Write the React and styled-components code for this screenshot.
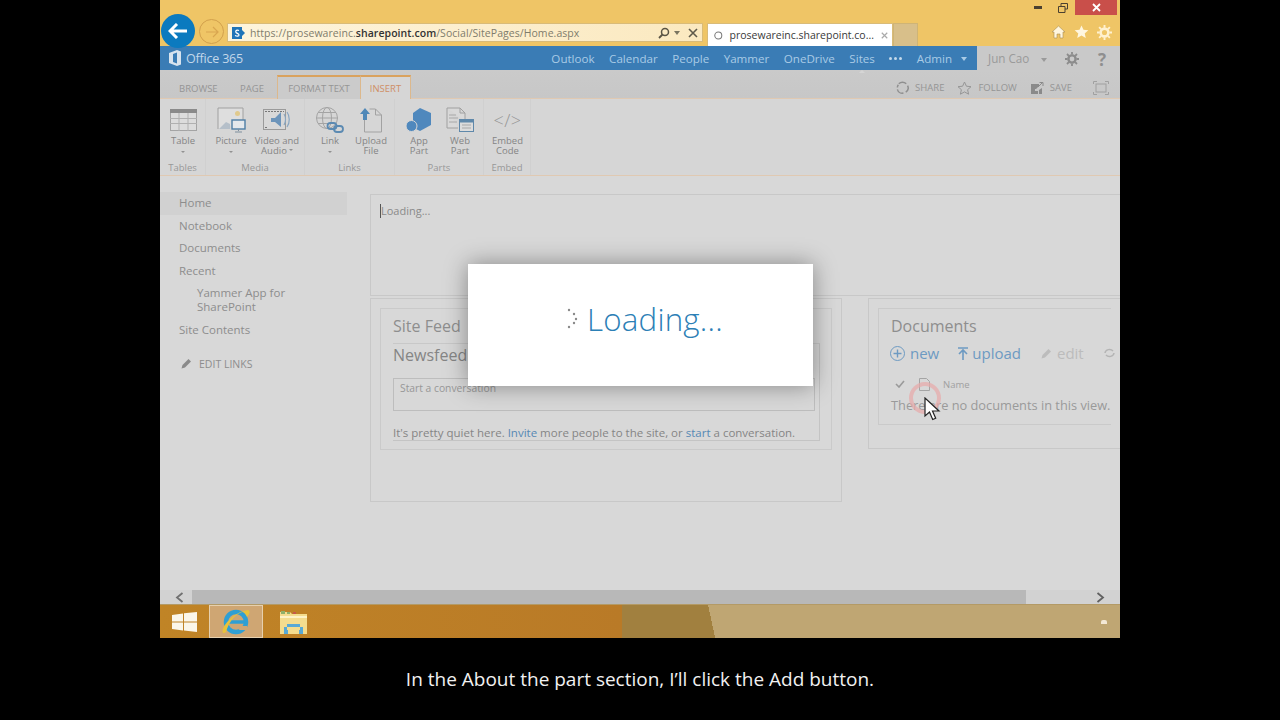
import React from 'react';
import styled, { createGlobalStyle } from 'styled-components';

const GlobalStyle = createGlobalStyle`
	html, body {
		margin: 0;
		padding: 0;
		background: #000;
		font-family: "Open Sans", "Liberation Sans", sans-serif;
	}
	* {
		box-sizing: border-box;
	}
`;

const Stage = styled.div`
	width: 1280px;
	height: 720px;
	background: #000;
	display: flex;
	flex-direction: column;
	align-items: center;
	overflow: hidden;
`;

const Screen = styled.div`
	position: relative;
	width: 960px;
	height: 638px;
	flex: none;
	display: flex;
	flex-direction: column;
	background: #d8d8d8;
	overflow: hidden;
`;

const Caption = styled.div`
	flex: 1;
	display: flex;
	align-items: center;
	justify-content: center;
	color: #f1f1f1;
	font-size: 19px;
`;

/* browser chrome */
const Chrome = styled.div`
	height: 46px;
	flex: none;
	background: #efc566;
	display: flex;
	flex-direction: column;
`;

const WindowControls = styled.div`
	height: 15px;
	margin-bottom: 8px;
	display: flex;
	justify-content: flex-end;
	align-items: center;
	padding-right: 3px;
`;

const WindowButton = styled.div`
	width: ${p => p.$w}px;
	height: 15px;
	display: flex;
	align-items: center;
	justify-content: center;
	background: ${p => p.$bg || 'transparent'};
`;

const NavRow = styled.div`
	height: 23px;
	display: flex;
	align-items: flex-start;
`;

const BackButton = styled.div`
	width: 34px;
	height: 34px;
	margin: -9px 0 0 1px;
	border-radius: 50%;
	background: #0b7abf;
	display: flex;
	align-items: center;
	justify-content: center;
	flex: none;
	position: relative;
	z-index: 1;
`;

const ForwardButton = styled.div`
	width: 25px;
	height: 25px;
	margin: -4px 0 0 4px;
	border-radius: 50%;
	border: 1px solid #d2a04c;
	display: flex;
	align-items: center;
	justify-content: center;
	flex: none;
`;

const AddressBar = styled.div`
	width: 476px;
	height: 19px;
	margin-left: 3px;
	flex: none;
	display: flex;
	align-items: center;
	padding: 0 4px;
	background: linear-gradient(90deg, #fdf4dc, #fbe9c0);
	border: 1px solid #d9bb78;
	font-size: 10.5px;
	color: #7f7c6c;
	letter-spacing: 0.05px;
`;

const Url = styled.span`
	margin-left: 4px;
	white-space: nowrap;
	b {
		font-weight: 600;
		color: #333;
	}
`;

const AddressTools = styled.div`
	margin-left: auto;
	display: flex;
	align-items: center;
	gap: 4px;
`;

const Tab = styled.div`
	width: 186px;
	height: 23px;
	margin-left: 4px;
	flex: none;
	background: #fff;
	display: flex;
	align-items: center;
	gap: 7px;
	padding: 0 4px 0 6px;
	font-size: 10.5px;
	color: #3a3a3a;
	white-space: nowrap;
	border: 1px solid #d9bb78;
	border-bottom: none;
`;

const NewTab = styled.div`
	width: 25px;
	height: 23px;
	flex: none;
	background: #d8bf8a;
	border: 1px solid #cfb475;
	border-bottom: none;
`;

const ChromeTools = styled.div`
	margin-left: auto;
	display: flex;
	gap: 8px;
	padding: 2px 8px 0 0;
`;

/* office 365 bar */
const SuiteBar = styled.div`
	height: 24px;
	flex: none;
	display: flex;
	background: #c9c9c9;
`;

const SuiteBlue = styled.div`
	width: 817px;
	flex: none;
	display: flex;
	align-items: center;
	background: #3a7cb5;
	padding: 0 10px 0 8px;
	color: #a9cbe6;
	font-size: 11.6px;
`;

const Logo = styled.div`
	display: flex;
	align-items: center;
	gap: 3px;
	color: #c3d8ea;
	font-size: 12.5px;
	letter-spacing: -0.2px;
`;

const SuiteNav = styled.nav`
	margin-left: auto;
	display: flex;
	align-items: center;
	gap: 14.5px;
`;

const SuiteLink = styled.span`
	position: relative;
	white-space: nowrap;
	${p => p.$active && `
		&::after {
			content: '';
			position: absolute;
			left: 50%;
			bottom: -7px;
			margin-left: -3px;
			border: 3px solid transparent;
			border-top: 0;
			border-bottom-color: #d5d5d5;
		}
	`}
`;

const Dots = styled.span`
	display: flex;
	gap: 2px;
	i {
		width: 3px;
		height: 3px;
		border-radius: 50%;
		background: #c4d9ea;
	}
`;

const Caret = styled.span`
	display: inline-block;
	margin-left: ${p => p.$gap || 0}px;
	margin-right: ${p => p.$after || 0}px;
	border: 3.5px solid transparent;
	border-bottom: 0;
	border-top: 4px solid ${p => p.$color || '#a9cbe6'};
	vertical-align: middle;
`;

const SuiteUser = styled.div`
	flex: 1;
	display: flex;
	align-items: center;
	padding-left: 11px;
	color: #9a9a9a;
	font-size: 11.7px;
`;

const UserTools = styled.div`
	margin-left: auto;
	display: flex;
	align-items: center;
	gap: 19px;
	padding: 2px 14px 0 0;
	font-size: 17px;
	font-weight: 700;
	color: #8f8f8f;
`;

/* ribbon */
const RibbonTabs = styled.div`
	height: 29px;
	flex: none;
	display: flex;
	align-items: flex-end;
	padding-left: 19px;
	background: linear-gradient(#cacaca, #c7c7c7);
	border-bottom: 1px solid #e0c9b2;
	font-size: 9.5px;
	color: #959595;
`;

const PlainTab = styled.span`
	width: ${p => p.$w}px;
	height: 23px;
	line-height: 28px;
	flex: none;
`;

const ContextTab = styled.span`
	width: ${p => p.$w}px;
	height: 24px;
	margin-bottom: -1px;
	flex: none;
	text-align: center;
	line-height: 23px;
	border: 1px solid #dcb88c;
	border-top: 2px solid #d9a25e;
	border-bottom: none;
	border-left-width: ${p => (p.$joined ? 0 : 1)}px;
	color: ${p => (p.$active ? '#cf8f66' : '#959595')};
	background: ${p => (p.$active ? '#d6d6d6' : '#cbcbcb')};
`;

const PageActions = styled.div`
	margin-left: auto;
	height: 100%;
	display: flex;
	align-items: center;
	padding: 7px 11px 0 0;
	font-size: 9.5px;
	color: #959595;
`;

const PageAction = styled.span`
	display: flex;
	align-items: center;
	gap: 6px;
	margin-right: ${p => p.$mr}px;
`;

const Ribbon = styled.div`
	height: 77px;
	flex: none;
	display: flex;
	background: #d6d6d6;
	border-bottom: 1px solid #e0c9b2;
`;

const RibbonGroup = styled.div`
	width: ${p => p.$w}px;
	flex: none;
	display: flex;
	flex-direction: column;
	border-right: 1px solid #d0d0d0;
`;

const GroupButtons = styled.div`
	flex: 1;
	display: flex;
	padding-top: 7px;
	padding-left: ${p => p.$pad || 0}px;
`;

const GroupLabel = styled.div`
	height: 14px;
	line-height: 14px;
	text-align: center;
	font-size: 9.5px;
	color: #989898;
`;

const RibbonButton = styled.div`
	width: ${p => p.$w}px;
	flex: none;
	display: flex;
	flex-direction: column;
	align-items: center;
	font-size: 9.5px;
	line-height: 9.5px;
	color: #858585;
	text-align: center;
	white-space: nowrap;
`;

const ButtonIcon = styled.div`
	height: 28px;
	margin-bottom: 2px;
	display: flex;
	align-items: center;
	justify-content: center;
`;

const EmbedGlyph = styled.span`
	font-size: 18px;
	font-weight: 300;
	line-height: 28px;
	color: #969696;
	letter-spacing: 0.5px;
`;

const SmallCaret = styled.span`
	display: inline-block;
	border: 2px solid transparent;
	border-bottom: 0;
	border-top: 2.5px solid #929292;
	margin: ${p => (p.$inline ? '0 0 1px 2px' : '5px 0 0')};
	vertical-align: middle;
`;

/* page */
const Content = styled.div`
	flex: 1;
	min-height: 0;
	display: flex;
	overflow: hidden;
`;

const Sidebar = styled.div`
	width: 210px;
	flex: none;
	padding-top: 16px;
	font-size: 11.5px;
	line-height: 14px;
	color: #8d8d8d;
`;

const NavItem = styled.div`
	width: 187px;
	padding: 4.25px 0 4.25px ${p => (p.$sub ? 37 : 19)}px;
	background: ${p => (p.$selected ? '#d1d1d1' : 'transparent')};
`;

const EditLinks = styled.div`
	display: flex;
	align-items: center;
	gap: 7px;
	margin-top: 11px;
	padding-left: 21px;
	height: 23px;
	font-size: 10.5px;
`;

const Main = styled.div`
	flex: 1;
	min-width: 0;
	padding-top: 18px;
`;

const EditorBox = styled.div`
	height: 102px;
	border: 1px solid #c8c8c8;
	border-right: none;
	padding: 9px 9px;
	font-size: 11px;
	line-height: 14px;
	color: #8a8a8a;
	display: flex;
`;

const TextCaret = styled.span`
	width: 1px;
	height: 14px;
	background: #555;
`;

const ZoneRow = styled.div`
	margin-top: 2px;
	display: flex;
	align-items: flex-start;
`;

const Zone = styled.div`
	width: ${p => p.$w}px;
	height: ${p => p.$h}px;
	margin-left: ${p => p.$ml || 0}px;
	flex: none;
	padding: 9px;
	border: 1px solid #c8c8c8;
	${p => p.$open && 'border-right: none;'}
`;

const WebPart = styled.div`
	height: ${p => p.$h}px;
	padding: 8px 12px 0;
	border: 1px solid #cacaca;
	${p => p.$open && 'border-right: none;'}
`;

const PartTitle = styled.div`
	font-size: 16px;
	line-height: 18px;
	height: 20px;
	color: #8e8e8e;
`;

const FeedBox = styled.div`
	width: 427px;
	height: 98px;
	margin-top: 6px;
	border-right: 1px solid #c4c4c4;
	border-bottom: 1px solid #c4c4c4;
	border-top: 1px solid #c8c8c8;
`;

const FeedTitle = styled.div`
	font-size: 16px;
	line-height: 22px;
	height: 34px;
	color: #858585;
`;

const Composer = styled.div`
	width: 422px;
	height: 33px;
	padding: 2px 6px;
	border: 1px solid #bdbdbd;
	font-size: 10.3px;
	line-height: 14px;
	color: #979797;
`;

const QuietText = styled.div`
	margin-top: 15px;
	font-size: 11.5px;
	line-height: 14px;
	color: #858585;
	white-space: nowrap;
`;

const InlineLink = styled.span`
	color: #5688b4;
`;

const DocToolbar = styled.div`
	display: flex;
	align-items: center;
	margin: 5px 0 0 -1px;
	height: 22px;
	font-size: 15px;
	white-space: nowrap;
`;

const DocAction = styled.span`
	display: flex;
	align-items: center;
	gap: ${p => p.$gap}px;
	margin-right: ${p => p.$mr || 0}px;
	color: ${p => (p.$off ? '#bcbcbc' : '#6d9ac2')};
`;

const ListHeader = styled.div`
	display: flex;
	align-items: center;
	height: 20px;
	margin-top: 10px;
	padding-left: 4px;
	font-size: 9.5px;
	color: #a0a0a0;
`;

const HeaderCell = styled.span`
	display: flex;
	margin-right: ${p => p.$mr}px;
`;

const EmptyText = styled.div`
	margin-top: 3px;
	font-size: 12.8px;
	line-height: 16px;
	color: #9a9a9a;
	white-space: nowrap;
`;

/* scrollbar and taskbar */
const Scrollbar = styled.div`
	height: 14px;
	flex: none;
	display: flex;
	align-items: center;
	background: #d2d2d2;
`;

const ScrollButton = styled.div`
	width: ${p => p.$w}px;
	flex: none;
	display: flex;
	padding-left: ${p => p.$pad}px;
`;

const ScrollThumb = styled.div`
	width: 834px;
	height: 14px;
	flex: none;
	background: #b8b8b8;
`;

const Taskbar = styled.div`
	height: 34px;
	flex: none;
	display: flex;
	align-items: center;
	background:
		linear-gradient(90deg, #c08426 0, #b97a27 462px, transparent 462px),
		linear-gradient(78deg, #a1803f 543px, #bfa673 543px);
	border-top: 1px solid #b39a66;
`;

const StartButton = styled.div`
	width: 49px;
	flex: none;
	display: flex;
	justify-content: center;
`;

const TaskItem = styled.div`
	width: 54px;
	height: 33px;
	margin-left: ${p => p.$ml || 0}px;
	flex: none;
	display: flex;
	align-items: center;
	justify-content: center;
	${p => p.$active && 'background: #cfa673; border: 1px solid #e6d0ae;'}
`;

const TrayArrow = styled.div`
	margin-left: auto;
	margin-right: 13px;
	width: 6px;
	height: 4px;
	background: #f3e8d6;
	border-radius: 2px 2px 0 0;
`;

/* overlays */
const Dialog = styled.div`
	position: absolute;
	left: 308px;
	top: 264px;
	width: 345px;
	height: 122px;
	background: #fff;
	box-shadow: 0 0 22px rgba(0, 0, 0, 0.38);
	display: flex;
	align-items: center;
	padding: 0 0 12px 98px;
	font-size: 31.3px;
	font-weight: 300;
	letter-spacing: 0.2px;
	color: #2c80b6;
	gap: 7px;
`;

const ClickRing = styled.div`
	position: absolute;
	left: 749px;
	top: 382px;
	width: 32px;
	height: 32px;
	border: 4px solid rgba(232, 170, 170, 0.7);
	border-radius: 50%;
`;

const Pointer = styled.svg`
	position: absolute;
	left: 764px;
	top: 397px;
`;

/* drawn icons */
const TableIcon = () => (
	<svg width="27" height="22" viewBox="0 0 27 22">
		<rect x="0.5" y="0.5" width="26" height="21" fill="#dcdcdc" stroke="#a4a4a4" />
		<rect x="0" y="0" width="27" height="4" fill="#8a8a8a" />
		<path d="M0 9.5h27M0 14.5h27M9 4v18M18 4v18" stroke="#b0b0b0" fill="none" />
	</svg>
);

const PictureIcon = () => (
	<svg width="29" height="26" viewBox="0 0 29 26">
		<path d="M1 22V1h25v14" fill="#dedede" stroke="#a0a0a0" />
		<path d="M2 22l7-7 4 2v5z" fill="#b5bfc9" />
		<circle cx="20.5" cy="6.5" r="2.5" fill="#e0c98c" />
		<rect x="15" y="13" width="13" height="9" fill="#e4e8ec" stroke="#4e7ea6" strokeWidth="1.4" />
		<path d="M21.5 22v2M18 25h7" stroke="#7f8f9d" />
	</svg>
);

const VideoIcon = () => (
	<svg width="28" height="24" viewBox="0 0 28 24">
		<rect x="0.5" y="1.5" width="22" height="20" fill="#d8d8d8" stroke="#9a9a9a" />
		<path d="M2 3.5h19M2 19.5h3" stroke="#777" strokeDasharray="2 1" fill="none" />
		<path d="M8 10h4l6-6v15l-6-5H8z" fill="#6c94ba" />
		<path d="M21 6c2 3 2 8 0 11M24 4c3 4 3 11 0 15" stroke="#88a6c2" fill="none" strokeWidth="1.2" />
	</svg>
);

const LinkIcon = () => (
	<svg width="30" height="26" viewBox="0 0 30 26">
		<circle cx="12" cy="11" r="10.5" fill="none" stroke="#a4a4a4" />
		<ellipse cx="12" cy="11" rx="4.5" ry="10.5" fill="none" stroke="#a4a4a4" />
		<path d="M1.5 11h21M3 5.5h18M3 16.5h18" stroke="#a4a4a4" fill="none" />
		<rect x="12.5" y="16" width="9" height="6" rx="3" fill="none" stroke="#5c8ab2" strokeWidth="1.8" />
		<rect x="19" y="19" width="9" height="6" rx="3" fill="none" stroke="#5c8ab2" strokeWidth="1.8" />
	</svg>
);

const UploadIcon = () => (
	<svg width="24" height="26" viewBox="0 0 24 26">
		<path d="M5.5 11v14h17V8l-6-6h-6M16.5 2v6h6" fill="none" stroke="#a2a2a2" />
		<path d="M6 1l5 6H8v6H4V7H1z" fill="#4f88b8" />
	</svg>
);

const AppPartIcon = () => (
	<svg width="26" height="24" viewBox="0 0 26 24">
		<path d="M14 0l11 5v12l-11 6-7-3.5V5z" fill="#4f88bd" />
		<circle cx="5.5" cy="18" r="5.5" fill="#4f88bd" stroke="#d6d6d6" />
	</svg>
);

const WebPartIcon = () => (
	<svg width="29" height="26" viewBox="0 0 29 26">
		<path d="M1 1h13l5 5v8M1 1v20h11M14 1v5h5" fill="#d9d9d9" stroke="#a0a0a0" />
		<path d="M3 8h7M3 11h9M3 15h8" stroke="#a8a8a8" fill="none" />
		<rect x="13.5" y="12.5" width="14" height="12" fill="#dcdcdc" stroke="#5f88aa" />
		<rect x="14" y="13" width="13" height="2.5" fill="#5f88aa" />
		<path d="M16 18h9M16 21h9" stroke="#a8a8a8" fill="none" />
	</svg>
);

const ShareIcon = () => (
	<svg width="13" height="13" viewBox="0 0 14 14">
		<path d="M3 3a5.5 5.5 0 0 1 8 0M12.5 5a5.5 5.5 0 0 1-2 7M8 13a5.5 5.5 0 0 1-6.5-4M1.5 7a5 5 0 0 1 1-3" fill="none" stroke="#8f8f8f" strokeWidth="1.6" />
	</svg>
);

const StarOutline = () => (
	<svg width="15" height="14" viewBox="0 0 15 14">
		<path d="M7.5 1l1.9 4.2 4.6.5-3.4 3 1 4.5-4.1-2.3-4.1 2.3 1-4.5-3.4-3 4.6-.5z" fill="none" stroke="#969696" />
	</svg>
);

const SaveIcon = () => (
	<svg width="14" height="14" viewBox="0 0 14 14">
		<path d="M1 3h8v2l-3 3h-1v5H1z M2 13v-3h6v3zM9 13V9l3-2v6z" fill="#8a8a8a" />
		<path d="M8 6l4-4M9.5 1.5H13V5" stroke="#8a8a8a" fill="none" />
	</svg>
);

const FullscreenIcon = () => (
	<svg width="16" height="14" viewBox="0 0 16 14">
		<rect x="3" y="3" width="10" height="8" fill="none" stroke="#a0a0a0" />
		<path d="M0.5 3V0.5H4M12 0.5h3.5V3M15.5 11v2.5H12M4 13.5H0.5V11" fill="none" stroke="#a0a0a0" />
	</svg>
);

const GearIcon = ({ size = 14, color = '#8c8c8c' }) => (
	<svg width={size} height={size} viewBox="0 0 14 14">
		<circle cx="7" cy="7" r="3.6" fill="none" stroke={color} strokeWidth="2.4" />
		<path d="M7 0v2.5M7 11.5V14M0 7h2.5M11.5 7H14M2 2l1.8 1.8M10.2 10.2L12 12M2 12l1.8-1.8M10.2 3.8L12 2" stroke={color} strokeWidth="1.8" />
	</svg>
);

const IeIcon = () => (
	<svg width="30" height="28" viewBox="0 0 30 28">
		<ellipse cx="15" cy="14" rx="10" ry="10" fill="none" stroke="#2f9fd3" strokeWidth="4.5" />
		<path d="M7 14h17" stroke="#2f9fd3" strokeWidth="3.5" />
		<path d="M19 18l7 0v4h-8z" fill="#cfa673" />
		<path d="M2 25C-1 20 12 4 27 2c3 1 1 5-1 7-1-3-3-5-5-5C12 7 7 17 5 24c-1 1-2 1-3 1z" fill="#e8c23a" />
	</svg>
);

const FolderIcon = () => (
	<svg width="30" height="28" viewBox="0 0 30 28">
		<path d="M1 4h10l2 2h15v20H1z" fill="#f4dc8e" />
		<path d="M2 3h4v3H2zM8 4h3v2H8z" fill="#8fb06a" />
		<path d="M14 4h3v2h-3z" fill="#c65a4a" />
		<path d="M1 8h27v2H1z" fill="#fdf3c8" />
		<path d="M5 26v-7h3v-3h13v3h3v7h-4v-4H9v4z" fill="#58a9d6" />
		<path d="M8 19h13v3H8z" fill="#f4dc8e" />
	</svg>
);

const App = () => {
	return (
		<Stage>
			<GlobalStyle />
			<Screen>
				<Chrome>
					<WindowControls>
						<WindowButton $w={25}>
							<svg width="8" height="3"><rect width="8" height="3" fill="#4a4030" /></svg>
						</WindowButton>
						<WindowButton $w={25}>
							<svg width="10" height="10" viewBox="0 0 10 10">
								<path d="M0.5 3.5h6.5v6H0.5zM3 3V0.5h6.5V6H7" fill="none" stroke="#4a4030" />
							</svg>
						</WindowButton>
						<WindowButton $w={42} $bg="#c94f4a">
							<svg width="9" height="9" viewBox="0 0 9 9">
								<path d="M1 1l7 7M8 1L1 8" stroke="#fff" strokeWidth="1.8" />
							</svg>
						</WindowButton>
					</WindowControls>
					<NavRow>
						<BackButton>
							<svg width="20" height="16" viewBox="0 0 20 16">
								<path d="M9 1L2 8l7 7M2 8h17" fill="none" stroke="#fff" strokeWidth="3" />
							</svg>
						</BackButton>
						<ForwardButton>
							<svg width="14" height="12" viewBox="0 0 14 12">
								<path d="M8 1l5 5-5 5M13 6H1" fill="none" stroke="#d9a650" strokeWidth="1.2" />
							</svg>
						</ForwardButton>
						<AddressBar>
							<svg width="14" height="14" viewBox="0 0 14 14">
								<rect x="0" y="1" width="10" height="12" fill="#1f74b8" />
								<path d="M10 4l3 3-3 3z" fill="#1f74b8" />
								<path d="M7 4.5C5 3.5 3 4.5 4 6.5c1 1 3 1 3 2.5 0 1.5-2 1.5-4 .5" fill="none" stroke="#fff" strokeWidth="1.2" />
							</svg>
							<Url>https://prosewareinc.<b>sharepoint.com</b>/Social/SitePages/Home.aspx</Url>
							<AddressTools>
								<svg width="12" height="12" viewBox="0 0 12 12">
									<circle cx="7" cy="5" r="3.5" fill="none" stroke="#5a5444" strokeWidth="1.5" />
									<path d="M4.5 7.5L1 11" stroke="#5a5444" strokeWidth="1.8" />
								</svg>
								<Caret $after={4} $color="#7a745f" />
								<svg width="10" height="10" viewBox="0 0 10 10">
									<path d="M1 1l8 8M9 1l-8 8" stroke="#5f5a4a" strokeWidth="1.6" />
								</svg>
							</AddressTools>
						</AddressBar>
						<Tab>
							<svg width="11" height="11" viewBox="0 0 11 11">
								<circle cx="5.5" cy="5.5" r="4.5" fill="none" stroke="#777" strokeWidth="1.3" />
							</svg>
							prosewareinc.sharepoint.co...
							<svg width="9" height="9" viewBox="0 0 9 9">
								<path d="M1 1l7 7M8 1L1 8" stroke="#aaa" strokeWidth="1.5" />
							</svg>
						</Tab>
						<NewTab />
						<ChromeTools>
							<svg width="15" height="14" viewBox="0 0 15 14">
								<path d="M7.5 1L1 7h2v6h3V9h3v4h3V7h2z" fill="#fff6df" stroke="#a88f55" strokeWidth="0.6" />
							</svg>
							<svg width="15" height="14" viewBox="0 0 15 14">
								<path d="M7.5 0.5l2 4.3 4.8.5-3.6 3.1 1.1 4.7-4.3-2.5-4.3 2.5 1.1-4.7L0.7 5.3l4.8-.5z" fill="#fff6df" />
							</svg>
							<GearIcon size={15} color="#fff1cf" />
						</ChromeTools>
					</NavRow>
				</Chrome>

				<SuiteBar>
					<SuiteBlue>
						<Logo>
							<svg width="15" height="16" viewBox="0 0 15 16">
								<path d="M1 3l8-3 4 1.5v13L9 16l-8-3zM5 4v8l4 1.500V2.500z" fill="#d7e3ee" fillRule="evenodd" />
							</svg>
							Office 365
						</Logo>
						<SuiteNav>
							<SuiteLink>Outlook</SuiteLink>
							<SuiteLink>Calendar</SuiteLink>
							<SuiteLink>People</SuiteLink>
							<SuiteLink>Yammer</SuiteLink>
							<SuiteLink>OneDrive</SuiteLink>
							<SuiteLink $active>Sites</SuiteLink>
							<Dots><i /><i /><i /></Dots>
							<SuiteLink>Admin<Caret $gap={9} /></SuiteLink>
						</SuiteNav>
					</SuiteBlue>
					<SuiteUser>
						<span>Jun Cao<Caret $gap={12} $color="#9a9a9a" /></span>
						<UserTools>
							<GearIcon />
							<span>?</span>
						</UserTools>
					</SuiteUser>
				</SuiteBar>

				<RibbonTabs>
					<PlainTab $w={61}>BROWSE</PlainTab>
					<PlainTab $w={37}>PAGE</PlainTab>
					<ContextTab $w={84}>FORMAT TEXT</ContextTab>
					<ContextTab $w={50} $active $joined>INSERT</ContextTab>
					<PageActions>
						<PageAction $mr={13}><ShareIcon />SHARE</PageAction>
						<PageAction $mr={13}><StarOutline />FOLLOW</PageAction>
						<PageAction $mr={21}><SaveIcon />SAVE</PageAction>
						<FullscreenIcon />
					</PageActions>
				</RibbonTabs>

				<Ribbon>
					<RibbonGroup $w={46}>
						<GroupButtons>
							<RibbonButton $w={46}>
								<ButtonIcon><TableIcon /></ButtonIcon>
								Table
								<SmallCaret />
							</RibbonButton>
						</GroupButtons>
						<GroupLabel>Tables</GroupLabel>
					</RibbonGroup>
					<RibbonGroup $w={99}>
						<GroupButtons $pad={1}>
							<RibbonButton $w={48}>
								<ButtonIcon><PictureIcon /></ButtonIcon>
								Picture
								<SmallCaret />
							</RibbonButton>
							<RibbonButton $w={44}>
								<ButtonIcon><VideoIcon /></ButtonIcon>
								Video and
								<span>Audio<SmallCaret $inline /></span>
							</RibbonButton>
						</GroupButtons>
						<GroupLabel>Media</GroupLabel>
					</RibbonGroup>
					<RibbonGroup $w={90}>
						<GroupButtons $pad={1}>
							<RibbonButton $w={48}>
								<ButtonIcon><LinkIcon /></ButtonIcon>
								Link
								<SmallCaret />
							</RibbonButton>
							<RibbonButton $w={34}>
								<ButtonIcon><UploadIcon /></ButtonIcon>
								Upload
								<span>File</span>
							</RibbonButton>
						</GroupButtons>
						<GroupLabel>Links</GroupLabel>
					</RibbonGroup>
					<RibbonGroup $w={89}>
						<GroupButtons>
							<RibbonButton $w={48}>
								<ButtonIcon><AppPartIcon /></ButtonIcon>
								App
								<span>Part</span>
							</RibbonButton>
							<RibbonButton $w={34}>
								<ButtonIcon><WebPartIcon /></ButtonIcon>
								Web
								<span>Part</span>
							</RibbonButton>
						</GroupButtons>
						<GroupLabel>Parts</GroupLabel>
					</RibbonGroup>
					<RibbonGroup $w={47}>
						<GroupButtons>
							<RibbonButton $w={47}>
								<ButtonIcon><EmbedGlyph>&lt;/&gt;</EmbedGlyph></ButtonIcon>
								Embed
								<span>Code</span>
							</RibbonButton>
						</GroupButtons>
						<GroupLabel>Embed</GroupLabel>
					</RibbonGroup>
				</Ribbon>

				<Content>
					<Sidebar>
						<NavItem $selected>Home</NavItem>
						<NavItem>Notebook</NavItem>
						<NavItem>Documents</NavItem>
						<NavItem>Recent</NavItem>
						<NavItem $sub>Yammer App for<br />SharePoint</NavItem>
						<NavItem>Site Contents</NavItem>
						<EditLinks>
							<svg width="11" height="11" viewBox="0 0 11 11">
								<path d="M0.5 10.5l1-3.5 6-6 2.5 2.5-6 6z" fill="#8a8a8a" />
							</svg>
							EDIT LINKS
						</EditLinks>
					</Sidebar>
					<Main>
						<EditorBox><TextCaret />Loading...</EditorBox>
						<ZoneRow>
							<Zone $w={472} $h={204}>
								<WebPart $h={142}>
									<PartTitle>Site Feed</PartTitle>
									<FeedBox>
										<FeedTitle>Newsfeed</FeedTitle>
										<Composer>Start a conversation</Composer>
										<QuietText>
											It's pretty quiet here. <InlineLink>Invite</InlineLink> more people to the site, or <InlineLink>start</InlineLink> a conversation.
										</QuietText>
									</FeedBox>
								</WebPart>
							</Zone>
							<Zone $w={252} $h={151} $ml={26} $open>
								<WebPart $h={117} $open>
									<PartTitle>Documents</PartTitle>
									<DocToolbar>
										<DocAction $gap={5} $mr={19}>
											<svg width="15" height="15" viewBox="0 0 15 15">
												<circle cx="7.5" cy="7.5" r="7" fill="none" stroke="#6d9ac2" />
												<path d="M7.5 3.5v8M3.5 7.5h8" stroke="#6d9ac2" strokeWidth="1.4" />
											</svg>
											new
										</DocAction>
										<DocAction $gap={4} $mr={20}>
											<svg width="10" height="13" viewBox="0 0 10 13">
												<path d="M0 1h10M5 3v10M1 7l4-4 4 4" fill="none" stroke="#6d9ac2" strokeWidth="1.6" />
											</svg>
											upload
										</DocAction>
										<DocAction $off $gap={5} $mr={20}>
											<svg width="11" height="11" viewBox="0 0 11 11">
												<path d="M0.5 10.5l1-3.5 6-6 2.5 2.5-6 6z" fill="#bcbcbc" />
											</svg>
											edit
										</DocAction>
										<DocAction $off $gap={0}>
											<svg width="11" height="10" viewBox="0 0 11 10">
												<path d="M1 5a4.5 4 0 0 1 8-2M10 5a4.5 4 0 0 1-8 2" fill="none" stroke="#b4b4b4" strokeWidth="1.5" />
											</svg>
										</DocAction>
									</DocToolbar>
									<ListHeader>
										<HeaderCell $mr={14}>
											<svg width="10" height="8" viewBox="0 0 10 8">
												<path d="M1 4l3 3 5-6" fill="none" stroke="#9a9a9a" strokeWidth="1.6" />
											</svg>
										</HeaderCell>
										<HeaderCell $mr={13}>
											<svg width="11" height="13" viewBox="0 0 11 13">
												<path d="M0.5 0.5h7l3 3v9h-10z" fill="none" stroke="#a4a4a4" />
											</svg>
										</HeaderCell>
										Name
									</ListHeader>
									<EmptyText>There are no documents in this view.</EmptyText>
								</WebPart>
							</Zone>
						</ZoneRow>
					</Main>
				</Content>

				<Scrollbar>
					<ScrollButton $w={32} $pad={15}>
						<svg width="9" height="11" viewBox="0 0 9 11">
							<path d="M7.5 1L2 5.5 7.5 10" fill="none" stroke="#707070" strokeWidth="1.8" />
						</svg>
					</ScrollButton>
					<ScrollThumb />
					<ScrollButton $w={94} $pad={70}>
						<svg width="9" height="11" viewBox="0 0 9 11">
							<path d="M1.5 1L7 5.5 1.5 10" fill="none" stroke="#606060" strokeWidth="1.8" />
						</svg>
					</ScrollButton>
				</Scrollbar>

				<Taskbar>
					<StartButton>
						<svg width="25" height="20" viewBox="0 0 25 20">
							<path d="M0 3l11-1.5V9.500H0zM12 1.300L25 0v9.500H12zM0 10.500h11v8L0 17zM12 10.500h13V20l-13-1.500z" fill="#fbf6ea" />
						</svg>
					</StartButton>
					<TaskItem $active><IeIcon /></TaskItem>
					<TaskItem $ml={4}><FolderIcon /></TaskItem>
					<TrayArrow />
				</Taskbar>

				<Dialog>
					<svg width="14" height="22" viewBox="0 0 14 22">
						<g fill="#8a8a8a">
							<circle cx="3" cy="2" r="1.2" />
							<circle cx="8" cy="6" r="1.2" />
							<circle cx="10" cy="11" r="1.2" />
							<circle cx="8" cy="15" r="1.2" />
							<circle cx="3" cy="19" r="1.2" />
						</g>
					</svg>
					Loading...
				</Dialog>
				<ClickRing />
				<Pointer width="17" height="24" viewBox="0 0 17 24">
					<path d="M1 1v18l4.500-4 3.200 7.500 3-1.300-3.200-7.200H15z" fill="#fff" stroke="#222" strokeWidth="1.2" />
				</Pointer>
			</Screen>
			<Caption>In the About the part section, I’ll click the Add button.</Caption>
		</Stage>
	);
};

export default App;
